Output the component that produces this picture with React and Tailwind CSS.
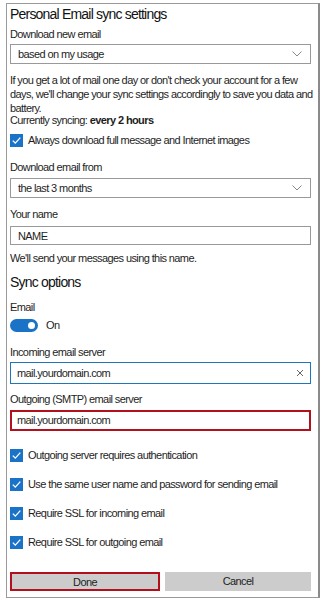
import { useState } from "react";

function Check({ label }) {
  return (
    <div className="flex items-center gap-[5px] h-[14px]">
      <span className="flex items-center justify-center w-[13px] h-[13px] bg-[#1a73c7] shrink-0">
        <svg width="11" height="11" viewBox="0 0 11 11">
          <path d="M1.8 5.6 L4.3 8.1 L9.3 2.6" fill="none" stroke="#fff" strokeWidth="1.3" />
        </svg>
      </span>
      <span className="text-[11px] tracking-[-0.6px] text-[#1e1e1e] whitespace-nowrap">{label}</span>
    </div>
  );
}

function Chevron() {
  return (
    <svg width="10" height="6" viewBox="0 0 10 6">
      <path d="M0.5 0.5 L5 5 L9.5 0.5" fill="none" stroke="#888" strokeWidth="1" />
    </svg>
  );
}

export default function App() {
  const [name, setName] = useState("NAME");

  return (
    <div className="w-[324px] h-[600px] bg-white pl-[6px] pt-[3px] pr-[4px] pb-[2px] font-['Liberation_Sans',Arial,sans-serif] text-[#1e1e1e] text-[11px] tracking-[-0.6px]">
      <div className="h-full border-l border-t border-[#9a9a9a] border-r-2 border-b border-r-[#8a8a8a] px-[3px] flex flex-col">
        <h1 className="text-[14px] tracking-[-0.8px] leading-[20px] text-[#111]">Personal Email sync settings</h1>

        <div className="leading-[14px] mt-[3px]">Download new email</div>
        <div className="mt-[3px] h-[20px] w-[301px] border border-[#999] flex items-center justify-between pl-[7px] pr-[8px]">
          <span>based on my usage</span>
          <Chevron />
        </div>

        <p className="leading-[14px] mt-[9px] w-[305px]">
          If you get a lot of mail one day or don't check your account for a few days, we'll change your sync settings accordingly to save you data and battery.
        </p>

        <div className="leading-[14px] mt-[-2px]">
          Currently syncing: <span className="font-bold">every 2 hours</span>
        </div>

        <div className="mt-[6px]">
          <Check label="Always download full message and Internet images" />
        </div>

        <div className="leading-[14px] mt-[13px]">Download email from</div>
        <div className="mt-[4px] h-[20px] w-[301px] border border-[#999] flex items-center justify-between pl-[7px] pr-[8px]">
          <span>the last 3 months</span>
          <Chevron />
        </div>

        <div className="leading-[14px] mt-[9px]">Your name</div>
        <input
          className="mt-[5px] h-[19px] w-[301px] border border-[#999] px-[7px] text-[11px] tracking-[-0.6px] outline-none"
          value={name}
          onChange={(e) => setName(e.target.value)}
        />
        <div className="leading-[14px] mt-[6px]">We'll send your messages using this name.</div>

        <h2 className="text-[14px] tracking-[-0.8px] leading-[20px] mt-[7px] text-[#111]">Sync options</h2>

        <div className="leading-[14px] mt-[8px]">Email</div>
        <div className="flex items-center gap-[8px] mt-[5px] h-[13px]">
          <span className="w-[28px] h-[13px] rounded-full bg-[#1a73c7] flex items-center justify-end pr-[3px]">
            <span className="w-[7px] h-[7px] rounded-full bg-white" />
          </span>
          <span>On</span>
        </div>

        <div className="leading-[14px] mt-[13px]">Incoming email server</div>
        <div className="mt-[3px] h-[22px] w-[301px] border border-[#1f77b9] flex items-center justify-between pl-[6px] pr-[6px]">
          <span>mail.yourdomain.com</span>
          <svg width="8" height="8" viewBox="0 0 8 8">
            <path d="M1 1 L7 7 M7 1 L1 7" stroke="#666" strokeWidth="1" />
          </svg>
        </div>

        <div className="leading-[14px] mt-[8px]">Outgoing (SMTP) email server</div>
        <div className="mt-[4px] h-[21px] w-[301px] border-2 border-[#b3101e] flex items-center pl-[5px]">
          <span>mail.yourdomain.com</span>
        </div>

        <div className="flex flex-col gap-[15px] mt-[17px]">
          <Check label="Outgoing server requires authentication" />
          <Check label="Use the same user name and password for sending email" />
          <Check label="Require SSL for incoming email" />
          <Check label="Require SSL for outgoing email" />
        </div>

        <div className="flex gap-[5px] mt-[23px] w-[301px]">
          <button className="flex-1 h-[19px] bg-[#cccccc] border-2 border-[#b3101e] text-[11px] tracking-[-0.6px] text-[#1e1e1e]">Done</button>
          <button className="flex-1 h-[19px] bg-[#cccccc] text-[11px] tracking-[-0.6px] text-[#1e1e1e]">Cancel</button>
        </div>
      </div>
    </div>
  );
}
